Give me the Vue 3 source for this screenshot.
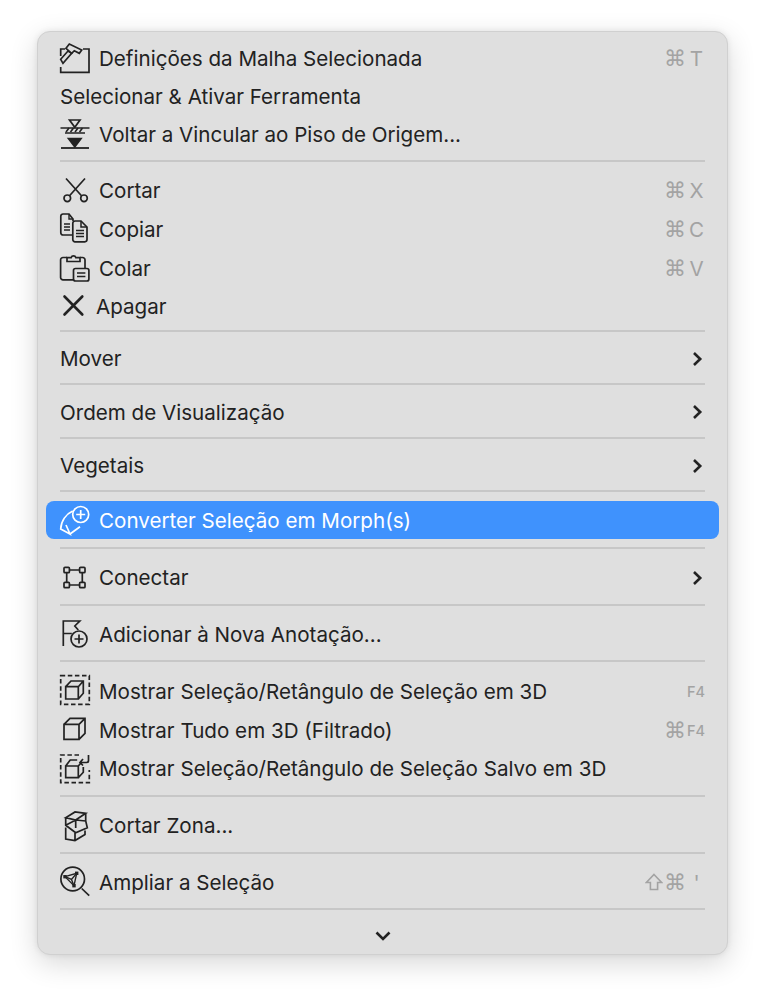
<template>
  <div class="page">
    <div class="menu">
      <template v-for="(item, i) in items" :key="i">
        <div v-if="item.sep" class="sep"></div>
        <div
          v-else
          class="row"
          :class="{ active: item.active, tight: item.tight }"
          :style="{ height: item.h + 'px' }"
        >
          <svg v-if="item.icon" class="icon" width="32" height="32" viewBox="0 0 32 32" v-html="icons[item.icon]"></svg>
          <span class="label">{{ item.label }}</span>
          <span v-if="item.keys" class="keys">
            <svg v-if="item.keys.shift" class="shift" width="18" height="18" viewBox="0 0 18 18">
              <path d="M9 1.500l7.600 8h-4v7h-7.200v-7h-4z" />
            </svg>
            <span v-if="item.keys.cmd" class="mod">⌘</span>
            <span class="key" :class="{ small: item.keys.small }">{{ item.keys.key }}</span>
          </span>
          <svg v-if="item.sub" class="chev" width="12" height="16" viewBox="0 0 12 16">
            <path d="M3 2l6.200 6L3 14" />
          </svg>
        </div>
      </template>
      <div class="more">
        <svg width="18" height="12" viewBox="0 0 18 12">
          <path d="M2.500 2.500L9 9l6.500-6.500" />
        </svg>
      </div>
    </div>
  </div>
</template>

<script setup>
const SEP = { sep: true }

const items = [
  { label: 'Definições da Malha Selecionada', icon: 'mesh', h: 37, keys: { cmd: true, key: 'T' } },
  { label: 'Selecionar & Ativar Ferramenta', h: 38 },
  { label: 'Voltar a Vincular ao Piso de Origem...', icon: 'link', h: 39 },
  SEP,
  { label: 'Cortar', icon: 'cut', h: 40, keys: { cmd: true, key: 'X' } },
  { label: 'Copiar', icon: 'copy', h: 38, keys: { cmd: true, key: 'C' } },
  { label: 'Colar', icon: 'paste', h: 40, keys: { cmd: true, key: 'V' } },
  { label: 'Apagar', icon: 'del', h: 36, tight: true },
  SEP,
  { label: 'Mover', h: 37, sub: true },
  SEP,
  { label: 'Ordem de Visualização', h: 38, sub: true },
  SEP,
  { label: 'Vegetais', h: 37, sub: true },
  SEP,
  { label: 'Converter Seleção em Morph(s)', icon: 'morph', h: 38, active: true },
  SEP,
  { label: 'Conectar', icon: 'connect', h: 41, sub: true },
  SEP,
  { label: 'Adicionar à Nova Anotação...', icon: 'note', h: 40 },
  SEP,
  { label: 'Mostrar Seleção/Retângulo de Seleção em 3D', icon: 'box3d', h: 42, keys: { key: 'F4', small: true } },
  { label: 'Mostrar Tudo em 3D (Filtrado)', icon: 'cube', h: 36, keys: { cmd: true, key: 'F4', small: true } },
  { label: 'Mostrar Seleção/Retângulo de Seleção Salvo em 3D', icon: 'boxSaved', h: 41 },
  SEP,
  { label: 'Cortar Zona...', icon: 'zone', h: 41 },
  SEP,
  { label: 'Ampliar a Seleção', icon: 'zoom', h: 40, keys: { shift: true, cmd: true, key: "'" } },
  SEP
]

const icons = {
  mesh: `<path d="M5 6H.7v7M23 6h6v23.300H.7V24"/><path d="M.7 16.300L8 8l3.700 2.300L3 20.300z"/><path d="M6 5.300L9.300 1l12.400 6-2.400 3.300-5-2.600-2.600 2.600z" fill="#dfdfdf"/>`,
  link: `<path d="M9.500 1h10.500l-5.200 7.200z"/><path d="M.5 9h29M5 14h20" stroke-width="1.600"/><path d="M6 13l3-4M10.500 13l3-4M15 13l3-4M19.500 13l3-4" stroke-width="1.600"/><path d="M8.500 19.500H21l-6.200 8.300z" fill="#222"/><path d="M1 29h28" stroke-width="1.800"/>`,
  cut: `<path d="M6 4.500l15.500 17.300M25 4.500L9.500 21.800"/><circle cx="7.300" cy="24.300" r="3.300"/><circle cx="24" cy="24.300" r="3.300"/>`,
  copy: `<path d="M12.500 22H3a2.200 2.200 0 0 1-2.200-2.200V3.200A2.200 2.200 0 0 1 3 1h6l4 5v2"/><path d="M9 1v5h4M4 11h6M4 14h6M4 17h6" stroke-width="1.400"/><path d="M15 8h6l6 6v12.600a2.200 2.200 0 0 1-2.200 2.200H15a2.200 2.200 0 0 1-2.200-2.200V10.200A2.200 2.200 0 0 1 15 8z"/><path d="M21 8v6h6M16 17.500h8M16 20.500h8M16 23.500h8" stroke-width="1.500"/>`,
  paste: `<path d="M13 27.800H3a2.400 2.400 0 0 1-2.400-2.400V8A2.400 2.400 0 0 1 3 5.500h4M20 5.500h2.600A2.400 2.400 0 0 1 25 8v8"/><path d="M7 9.500V5.600h4.200a2.400 2.400 0 0 1 4.600 0H20v3.900z"/><rect x="13.500" y="16.500" width="15.400" height="12.500" rx="2"/><path d="M17 21h8.400M17 24.500h8.400"/>`,
  del: `<path d="M4.500 6.500l17.800 18M22.300 6.500L4.500 24.500" stroke-width="2.600" stroke-linecap="round"/>`,
  morph: `<g stroke="#fff"><circle cx="20.700" cy="10.500" r="8"/><path d="M20.700 6v9M16.200 10.500h9"/><path d="M12.700 7C6 10 1 17 .7 25L10 30 6 21M10 30l10-7.300"/></g>`,
  connect: `<path d="M9.400 8h10.200M9.400 23h10.200M6.700 10.700v9.600M22.300 10.700v9.600"/><rect x="4" y="5.300" width="5.400" height="5.400" rx="1"/><rect x="19.600" y="5.300" width="5.400" height="5.400" rx="1"/><rect x="4" y="20.300" width="5.400" height="5.400" rx="1"/><rect x="19.600" y="20.300" width="5.400" height="5.400" rx="1"/>`,
  note: `<path d="M3.300 28V3h16.500l-5 5 3.500 4M3.300 15.500h8.500"/><circle cx="19" cy="21" r="8"/><path d="M19 16.500v9M14.500 21h9"/>`,
  box3d: `<path d="M.7 .7h28.600v28.600H.7z" stroke-dasharray="4.500 2.600"/><path d="M5.700 11.700h12.600V24H5.700zM5.700 11.700l5.300-5.700h12.300v12.300L18.300 24M18.300 11.700l5-5.700"/>`,
  cube: `<path d="M4 10.300h15v15H4zM4 10.300l6-6h15v15l-6 6M19 10.300l6-6"/>`,
  boxSaved: `<path d="M19 2H.7v27.700h28.600V17" stroke-dasharray="4.500 2.600"/><path d="M5.700 13h12.600v11.700H5.700zM5.700 13l4.500-6h7M18.300 13l3.600-4M18.300 24.700l5-5.500V14"/><path d="M28.500 2v5.500a2 2 0 0 1-2 2h-6M23 6l-3 3.500 3 3"/>`,
  zone: `<path d="M5.700 7.700L15 2l10.700 1.300L15.700 10zM15.700 10v8M5.700 7.700v7.600l10 7.400 11.600-5-1.600-6.700V3.300M5.700 15.300l10-5.300 10 1"/><path d="M5.700 17.500v11.500l9.300 1.500 10-6v-4M15 23v7.500"/>`,
  zoom: `<circle cx="12.700" cy="13" r="11.800"/><path d="M21.700 22.500l7.500 7.200"/><path d="M5 10.700L16.700 7.300 14 19.700z" stroke-width="1.400"/><path d="M5 10.700l6.500 2.800 5.200-6.200M11.500 13.500l2.500 6.200" stroke-width="1.400"/><rect x="3.300" y="9" width="3.400" height="3.400" fill="#222" stroke="none"/><rect x="15" y="5.600" width="3.400" height="3.400" fill="#222" stroke="none"/><rect x="12.300" y="18" width="3.400" height="3.400" fill="#222" stroke="none"/>`
}
</script>

<style scoped>
.page {
  padding: 31px 37px 44px;
}

.menu {
  display: flex;
  flex-direction: column;
  box-sizing: border-box;
  width: 691px;
  padding-top: 8px;
  background: #dfdfdf;
  border: 1px solid #d0d0d0;
  border-radius: 13px;
  box-shadow: 0 8px 28px rgba(0, 0, 0, 0.16), 0 0 6px rgba(0, 0, 0, 0.08);
  font-family: Inter, "Liberation Sans", sans-serif;
  color: #222;
}

.row {
  display: flex;
  align-items: center;
  padding: 0 22px;
  font-size: 20.6px;
  white-space: nowrap;
}

.row.active {
  margin: 1px 8px 2px;
  padding: 0 14px;
  background: #3f92fd;
  border-radius: 8px;
  color: #fff;
}

.icon {
  flex: none;
  margin-right: 7px;
  overflow: visible;
  fill: none;
  stroke: #222;
  stroke-width: 1.700;
}

.row.tight .icon {
  margin-right: 4px;
}

.label {
  flex: 1;
}

.keys {
  display: flex;
  align-items: center;
  color: #a3a3a3;
}

.shift {
  margin-right: 1px;
  fill: none;
  stroke: #a3a3a3;
  stroke-width: 1.600;
}

.mod {
  width: 21px;
  font-family: "DejaVu Sans", sans-serif;
  font-size: 22px;
  text-align: center;
}

.key {
  display: flex;
  justify-content: center;
  width: 17px;
  margin-left: 3px;
}

.key.small {
  justify-content: flex-end;
  font-size: 14.500px;
  font-weight: 500;
}

.chev {
  flex: none;
  margin-right: 2px;
  fill: none;
  stroke: #222;
  stroke-width: 2.600;
}

.sep {
  flex: none;
  height: 2px;
  margin: 6px 22px 8px;
  background: #c7c7c7;
}

.more {
  display: flex;
  align-items: center;
  justify-content: center;
  height: 36px;
}

.more svg {
  fill: none;
  stroke: #222;
  stroke-width: 2.600;
}
</style>

<style>
body {
  background: #fff;
}
</style>
